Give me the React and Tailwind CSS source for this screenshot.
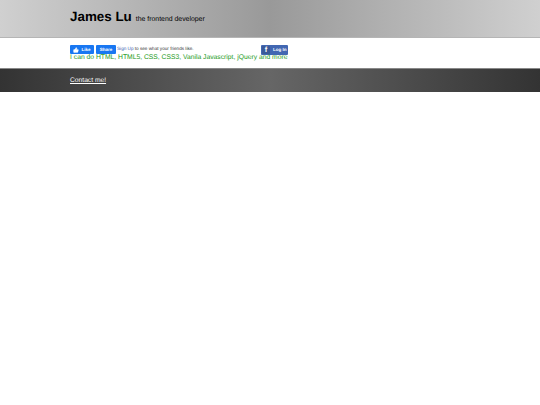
import { ThumbsUp } from 'lucide-react';

function LikeBar() {
  return (
    <div className="flex items-center h-[9px] w-[218px]">
      <span className="flex items-center justify-center gap-[2px] w-[24px] h-[9px] pt-[1px] bg-[#1877f2] rounded-[1px] text-white text-[4.5px] leading-[8px] font-bold">
        <ThumbsUp size={6} fill="white" strokeWidth={1} className="mt-[-1px]" />
        Like
      </span>
      <span className="ml-[2px] flex items-center justify-center w-[20px] h-[9px] pt-[1px] bg-[#1877f2] rounded-[1px] text-white text-[4.5px] leading-[8px] font-bold">
        Share
      </span>
      <span className="ml-[1px] text-[4.65px] text-[#333]">
        <span className="text-[#4267b2]">Sign Up</span> to see what your friends like.
      </span>
      <span className="ml-auto flex items-center gap-[3px] w-[27px] h-[10px] bg-[#4267b2] rounded-[1px] text-white text-[4.5px] leading-[8px] font-bold">
        <span className="ml-[1px] flex items-center justify-center w-[8px] h-[8px] bg-[#3b5998] rounded-[1px] text-white text-[7.5px] leading-[8px] font-bold">f</span>
        Log In
      </span>
    </div>
  );
}

export default function App() {
  return (
    <div className="min-h-[405px] bg-white antialiased [text-rendering:geometricPrecision] font-['Liberation_Sans',Arial,sans-serif]">
      <header className="h-[38px] pl-[70px] pt-[8px] bg-[linear-gradient(to_right,#d0d0d0,#999999_50%,#d0d0d0)] border-b border-[#b5b5b5]">
        <div className="flex items-baseline gap-[4px] text-black">
          <h1 className="text-[13.4px] leading-[18px] font-bold">James Lu</h1>
          <span className="text-[6.9px] leading-[10px]">the frontend developer</span>
        </div>
      </header>

      <main className="h-[30px] pl-[70px] pt-[7px]">
        <LikeBar />
        <p className="text-[6.75px] leading-[9px] mt-[-1px] text-[#1a9a1a]">
          I can do HTML, HTML5, CSS, CSS3, Vanila Javascript, jQuery and more
        </p>
      </main>

      <footer className="h-[24px] pl-[70px] pt-[7px] bg-[linear-gradient(to_right,#333333,#666666_50%,#333333)] border-t border-[#888]">
        <a href="#" className="block text-[6.7px] leading-[10px] text-white underline">Contact me!</a>
      </footer>
    </div>
  );
}
